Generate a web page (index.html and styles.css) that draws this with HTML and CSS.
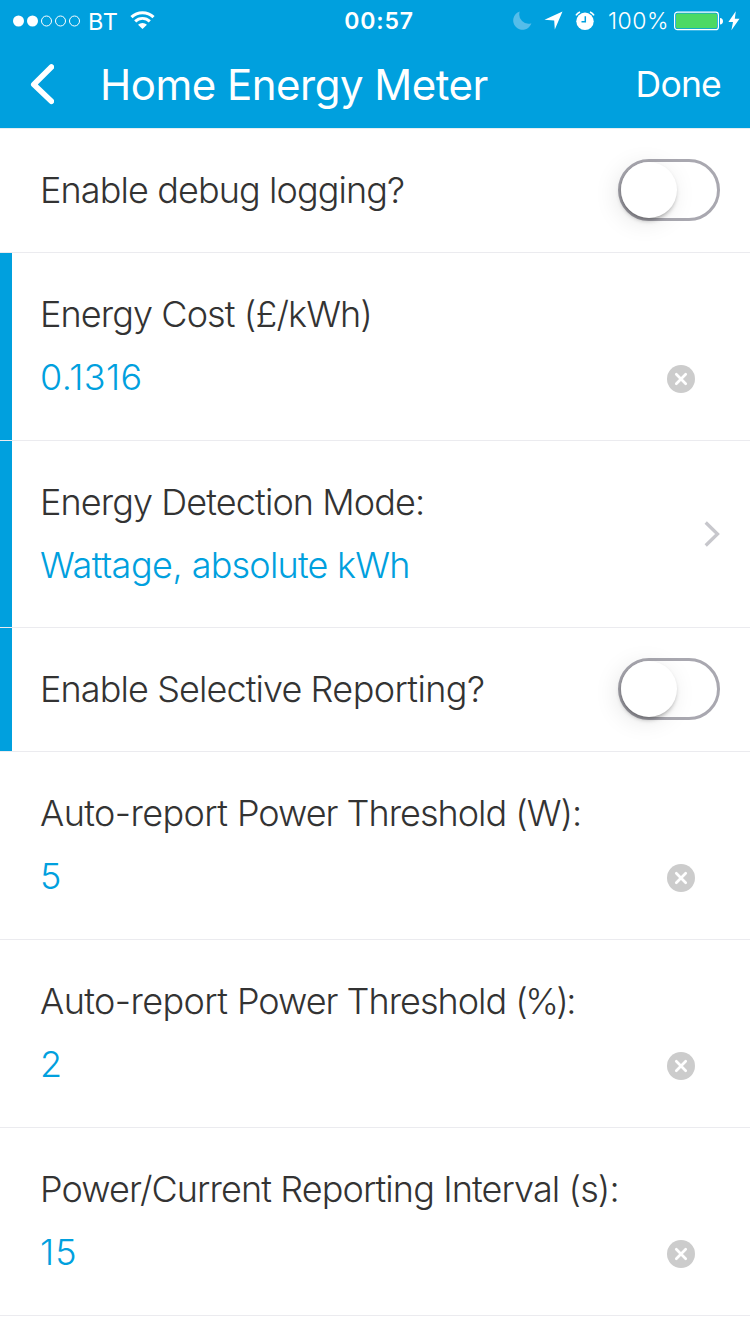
FILE: index.html
```html
<!DOCTYPE html>
<html lang="en">
<head>
<meta charset="utf-8">
<title>Home Energy Meter</title>
<link rel="stylesheet" href="styles.css">
</head>
<body>
<header class="header">
  <div class="status">
    <div class="status-left">
      <svg class="signal" width="68" height="12" viewBox="0 0 68 12"><g fill="#fff"><circle cx="5.5" cy="6" r="5.5"/><circle cx="19.5" cy="6" r="5.5"/></g><g fill="none" stroke="#fff" stroke-width="1"><circle cx="33.5" cy="6" r="5"/><circle cx="47.5" cy="6" r="5"/><circle cx="61.5" cy="6" r="5"/></g></svg>
      <span class="carrier">BT</span>
      <svg class="wifi" width="25" height="19" viewBox="0 0 26 20"><path d="M1.4 6.5A16.8 16.8 0 0 1 24.6 6.5" fill="none" stroke="#fff" stroke-width="3.3"/><path d="M5.3 10.9A11 11 0 0 1 20.7 10.9" fill="none" stroke="#fff" stroke-width="3.1"/><path d="M13 19L8.3 14.5A7 7 0 0 1 17.7 14.5Z" fill="#fff"/></svg>
    </div>
    <span class="time">00:57</span>
    <div class="status-right">
      <svg class="moon" width="19" height="19" viewBox="0 0 19 19"><path d="M6.7.6A9.3 9.3 0 1 0 18.4 12.2A9.3 9.3 0 0 1 6.7.6Z" fill="#55bdea"/></svg>
      <svg class="arrow" width="19" height="19" viewBox="0 0 19 19"><path d="M18.5.4L10.8 18.4L10.2 9.4L.5 8.8Z" fill="#fff"/></svg>
      <svg class="alarm" width="20" height="19" viewBox="0 0 20 19"><circle cx="10" cy="10.3" r="8.7" fill="#fff"/><path d="M1 4.4A9 9 0 0 1 5 1M19 4.4A9 9 0 0 0 15 1" fill="none" stroke="#fff" stroke-width="1.7"/><path d="M10.3 5.2V10.8H6.5" fill="none" stroke="#00a0de" stroke-width="1.5"/></svg>
      <span class="percent">100%</span>
      <svg class="battery" width="50" height="20" viewBox="0 0 50 20"><rect x=".6" y="1.1" width="43.8" height="17.6" rx="2.8" fill="none" stroke="#fff" stroke-width="1.2"/><rect x="2" y="2.5" width="41" height="14.8" rx="1.5" fill="#4cd964"/><path d="M46 7C50 7 50 13.5 46 13.5Z" fill="#fff"/></svg>
      <svg class="bolt" width="12" height="20" viewBox="0 0 12 20"><path d="M7.8.2L.4 11H5L3.4 19.3L11.5 7.8H6.8Z" fill="#fff"/></svg>
    </div>
  </div>
  <div class="navbar">
    <svg class="back" width="24" height="42" viewBox="0 0 24 42"><path d="M21.4 3L3.8 20.5L21.4 37.3" fill="none" stroke="#fff" stroke-width="5.6" stroke-linecap="round" stroke-linejoin="round"/></svg>
    <h1 class="title">Home Energy Meter</h1>
    <span class="done">Done</span>
  </div>
</header>
<main class="settings">
  <section class="row toggle-row">
    <div class="text"><span class="label">Enable debug logging?</span></div>
    <div class="switch"><div class="knob"></div></div>
  </section>
  <section class="row field-row changed">
    <div class="text"><span class="label">Energy Cost (£/kWh)</span><span class="value digits">0.1316</span></div>
    <svg class="clear" width="28" height="28" viewBox="0 0 28 28"><circle cx="14" cy="14" r="14" fill="#ccc"/><path d="M9.3 9.3L18.7 18.7M18.7 9.3L9.3 18.7" stroke="#fff" stroke-width="2.7" stroke-linecap="round"/></svg>
  </section>
  <section class="row field-row choice-row changed">
    <div class="text"><span class="label">Energy Detection Mode:</span><span class="value choice"><span class="loose">Wattage, </span>absolute kWh</span></div>
    <svg class="chevron" width="17" height="26" viewBox="0 0 17 26"><path d="M1.7 1.5L13.5 13L1.7 24.5" fill="none" stroke="#c7c7cc" stroke-width="3.3"/></svg>
  </section>
  <section class="row toggle-row changed">
    <div class="text"><span class="label">Enable Selective <span class="loose">Reporting?</span></span></div>
    <div class="switch"><div class="knob"></div></div>
  </section>
  <section class="row field-row">
    <div class="text"><span class="label"><span class="loose">Auto-report </span><span class="snug">Power Threshold (W):</span></span><span class="value">5</span></div>
    <svg class="clear" width="28" height="28" viewBox="0 0 28 28"><circle cx="14" cy="14" r="14" fill="#ccc"/><path d="M9.3 9.3L18.7 18.7M18.7 9.3L9.3 18.7" stroke="#fff" stroke-width="2.7" stroke-linecap="round"/></svg>
  </section>
  <section class="row field-row">
    <div class="text"><span class="label"><span class="loose">Auto-report </span><span class="snug">Power Threshold </span><span class="tight">(%):</span></span><span class="value">2</span></div>
    <svg class="clear" width="28" height="28" viewBox="0 0 28 28"><circle cx="14" cy="14" r="14" fill="#ccc"/><path d="M9.3 9.3L18.7 18.7M18.7 9.3L9.3 18.7" stroke="#fff" stroke-width="2.7" stroke-linecap="round"/></svg>
  </section>
  <section class="row field-row">
    <div class="text"><span class="label">Power/Current Reporting Interval (s):</span><span class="value pair">15</span></div>
    <svg class="clear" width="28" height="28" viewBox="0 0 28 28"><circle cx="14" cy="14" r="14" fill="#ccc"/><path d="M9.3 9.3L18.7 18.7M18.7 9.3L9.3 18.7" stroke="#fff" stroke-width="2.7" stroke-linecap="round"/></svg>
  </section>
</main>
</body>
</html>
```
FILE: styles.css
```css
* { box-sizing: border-box; }
body { margin: 0; background: #fff; color: #333; font-family: Inter, "Liberation Sans", sans-serif; font-weight: 300; width: 750px; height: 1334px; overflow: hidden; }
svg { display: block; flex: none; }
.header { height: 129px; background: #00a0de; background-clip: padding-box; color: #fff; border-bottom: 1px solid #e4eef2; }
.status { height: 41px; display: grid; grid-template: 41px / 1fr auto 1fr; align-items: center; font-size: 23px; line-height: 41px; font-weight: 400; }
.status-left, .status-right { display: flex; align-items: center; height: 41px; }
.status-left { padding-left: 13px; }
.carrier { margin-left: 7px; width: 42px; font-weight: 400; font-size: 23.5px; letter-spacing: .6px; padding-top: 1px; }
.wifi { margin-top: -1px; }
.time { font-weight: 600; letter-spacing: .8px; margin-left: 8px; padding-top: 1px; }
.status-right { justify-content: flex-end; padding-right: 10px; }
.arrow { margin-left: 12px; }
.alarm { margin-left: 12px; }
.percent { width: 66px; margin-left: 13px; font-weight: 300; letter-spacing: .5px; white-space: nowrap; padding-top: 1px; }
.bolt { margin-left: 4px; }
.navbar { height: 87px; display: flex; align-items: center; padding: 0 29px 0 30px; }
.title { margin: 0 0 0 46px; flex: 1; font-size: 42px; line-height: 60px; font-weight: 400; letter-spacing: -.5px; white-space: nowrap; }
.done { font-size: 35.5px; line-height: 58px; font-weight: 400; letter-spacing: -.8px; padding-top: 1px; }
.row { display: flex; align-items: center; border-bottom: 1px solid #ebebef; white-space: nowrap; font-size: 36px; padding-left: 40px; }
.toggle-row { height: 124px; padding-right: 30px; }
.field-row { height: 188px; padding-right: 55px; }
.choice-row { height: 187px; padding-right: 29px; }
.changed { box-shadow: inset 12px 0 0 #00a0de; }
.text { flex: 1; display: flex; flex-direction: column; align-items: flex-start; }
.label, .value { line-height: 63px; white-space: pre; }
.label { letter-spacing: -.9px; }
.field-row .text { padding-bottom: 1px; }
.value { color: #00a0de; }
.digits { letter-spacing: .4px; }
.pair { letter-spacing: 1px; }
.choice { letter-spacing: -.8px; }
.loose { letter-spacing: -.6px; }
.choice .loose { letter-spacing: -.5px; }
.snug { letter-spacing: -1px; }
.tight { letter-spacing: -2.6px; }
.clear { margin-top: 64px; }
.switch { width: 102px; height: 62px; margin-bottom: 2px; border: 3px solid #a9a8b0; border-radius: 31px; flex: none; }
.knob { width: 56px; height: 56px; border-radius: 50%; background: #fff; box-shadow: -1px 3px 5px -1px rgba(0,0,0,.38), -4px 4px 24px rgba(0,0,0,.1); }
```
